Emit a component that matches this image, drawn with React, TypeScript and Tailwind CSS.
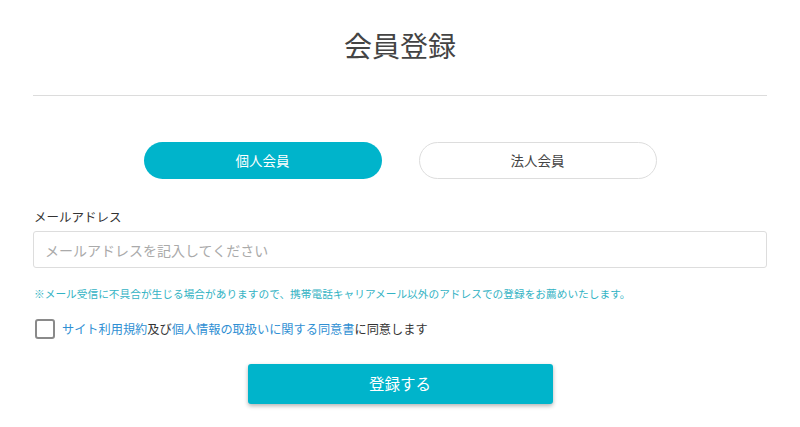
import { useState } from "react";

const font = { fontFamily: "'Noto Sans CJK JP', 'Noto Sans', sans-serif" };

export default function App() {
  const [tab, setTab] = useState("personal");
  const [agree, setAgree] = useState(false);

  return (
    <div className="min-h-screen bg-white text-[#333]" style={font}>
      <div className="w-[734px] mx-auto flex flex-col">
        {/* TITLE */}
        <h1 className="pt-[25px] h-[65px] text-center text-[28px] leading-[40px] font-normal text-[#444]">会員登録</h1>
        <div className="mt-[30px] h-px bg-[#dcdcdc]" />

        {/* TABS */}
        <div className="mt-[46px] flex justify-center gap-[37px]">
          <button
            onClick={() => setTab("personal")}
            className={`w-[238px] h-[37px] rounded-full text-[13.5px] ${
              tab === "personal" ? "bg-[#00b4cb] text-white" : "bg-white border border-[#dddddd] text-[#444]"
            }`}
          >
            個人会員
          </button>
          <button
            onClick={() => setTab("corporate")}
            className={`w-[238px] h-[37px] rounded-full text-[13.5px] ${
              tab === "corporate" ? "bg-[#00b4cb] text-white" : "bg-white border border-[#dddddd] text-[#444]"
            }`}
          >
            法人会員
          </button>
        </div>

        {/* EMAIL */}
        <label className="mt-[28px] pl-px text-[12.5px] leading-[20px] text-[#333]">メールアドレス</label>
        <input
          className="mt-[4px] h-[37px] border border-[#dddddd] rounded-[3px] px-[11px] text-[14px] outline-none placeholder:text-[#aaa]"
          placeholder="メールアドレスを記入してください"
        />
        <p className="mt-[18px] pl-px text-[10.7px] leading-[16px] text-[#33b3c4] whitespace-nowrap">
          ※メール受信に不具合が生じる場合がありますので、携帯電話キャリアメール以外のアドレスでの登録をお薦めいたします。
        </p>

        {/* AGREE */}
        <div className="mt-[17px] flex items-center h-[20px] pl-[2px]">
          <button
            onClick={() => setAgree(!agree)}
            className="w-[20px] h-[20px] border-2 border-[#8a8a8a] rounded-[3px] bg-white flex items-center justify-center"
          >
            {agree && (
              <svg width="12" height="12" viewBox="0 0 12 12">
                <path d="M2 6l3 3 5-6" stroke="#00b4cb" strokeWidth="2" fill="none" />
              </svg>
            )}
          </button>
          <span className="ml-[7px] text-[12.2px] leading-[20px] text-[#333]">
            <a className="text-[#2f8fd3]">サイト利用規約</a>及び
            <a className="text-[#2f8fd3]">個人情報の取扱いに関する同意書</a>に同意します
          </span>
        </div>

        {/* SUBMIT */}
        <div className="mt-[25px] flex justify-center">
          <button className="w-[305px] h-[40px] rounded-[3px] bg-[#00b4cb] text-white text-[15.5px] shadow-[0_2px_4px_rgba(0,0,0,0.3)]">
            登録する
          </button>
        </div>
      </div>
    </div>
  );
}
